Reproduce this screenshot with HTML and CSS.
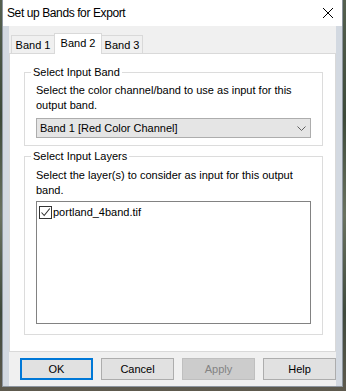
FILE: index.html
```html
<!DOCTYPE html>
<html>
<head>
<meta charset="utf-8">
<link rel="stylesheet" href="styles.css">
</head>
<body>
<div class="desk">
  <div class="dialog">
    <div class="titlebar">
      <span class="title">Set up Bands for Export</span>
      <svg class="close" width="12" height="12" viewBox="0 0 12 12"><path d="M1 1 L11 11 M11 1 L1 11" stroke="#000" stroke-width="1" fill="none"/></svg>
    </div>
    <div class="client">
      <div class="tabs">
        <div class="tab t1">Band 1</div>
        <div class="tab t2 active">Band 2</div>
        <div class="tab t3">Band 3</div>
      </div>
      <div class="panel">
        <fieldset class="group g1">
          <legend>Select Input Band</legend>
          <p class="desc">Select the color channel/band to use as input for this<br>output band.</p>
          <div class="combo">
            <span>Band 1 [Red Color Channel]</span>
            <svg class="chev" width="9" height="5" viewBox="0 0 9 5"><path d="M0.5 0.5 L4.5 4.5 L8.5 0.5" stroke="#606060" stroke-width="1" fill="none"/></svg>
          </div>
        </fieldset>
        <fieldset class="group g2">
          <legend>Select Input Layers</legend>
          <p class="desc">Select the layer(s) to consider as input for this output<br>band.</p>
          <div class="listbox">
            <div class="item">
              <span class="check"><svg width="11" height="11" viewBox="0 0 11 11"><path d="M1.5 5.5 L4.2 8.5 L9.8 1.5" stroke="#333" stroke-width="1.1" fill="none"/></svg></span>
              <span class="label">portland_4band.tif</span>
            </div>
          </div>
        </fieldset>
      </div>
      <div class="buttons">
        <div class="btn default">OK</div>
        <div class="btn">Cancel</div>
        <div class="btn disabled">Apply</div>
        <div class="btn">Help</div>
      </div>
    </div>
  </div>
</div>
</body>
</html>
```

FILE: styles.css
```css
html, body {
  margin: 0;
  padding: 0;
}
body {
  width: 346px;
  height: 391px;
  overflow: hidden;
  font-family: "Liberation Sans", Arial, sans-serif;
  font-size: 11px;
  color: #000;
}
.desk {
  width: 346px;
  height: 391px;
  background: linear-gradient(180deg, #55604f 0%, #3d4a3a 30%, #6a7260 55%, #3f4a3d 80%, #5e5a4e 100%);
  padding-left: 2px;
  box-sizing: border-box;
}
.dialog {
  width: 341px;
  height: 387px;
  box-sizing: border-box;
  border: 1px solid #8e96a0;
  border-top: none;
  background: #f0f0f0;
  display: flex;
  flex-direction: column;
}
.titlebar {
  height: 26px;
  flex: none;
  background: #fff;
  display: flex;
  align-items: center;
  padding-left: 4px;
  padding-right: 8px;
}
.title {
  font-size: 12px;
  letter-spacing: -0.4px;
  flex: 1;
  padding-bottom: 1px;
}
.close {
  display: block;
}
.client {
  flex: 1;
  border-left: 6px solid #d3d9e1;
  border-right: 6px solid #d3d9e1;
  padding-top: 7px;
  display: flex;
  flex-direction: column;
}
.tabs {
  display: flex;
  height: 20px;
  padding-left: 2px;
  position: relative;
  z-index: 1;
}
.tab {
  box-sizing: border-box;
  border: 1px solid #d9d9d9;
  border-bottom: none;
  background: #f0f0f0;
  margin-top: 2px;
  height: 18px;
  display: flex;
  align-items: center;
  justify-content: center;
  padding-top: 1px;
}
.t1 { width: 43px; border-right: none; }
.t2 { width: 48px; }
.t3 { width: 41px; border-left: none; }
.tab.active {
  background: #fff;
  margin-top: 0;
  height: 21px;
  padding-top: 0;
  padding-bottom: 2px;
}
.panel {
  box-sizing: border-box;
  width: 327px;
  background: #fff;
  border: 1px solid #d9d9d9;
  padding: 10px 12px 16px 14px;
}
.group {
  margin: 0;
  width: 299px;
  box-sizing: border-box;
  border: 1px solid #dcdcdc;
  padding: 3px 11px 7px 11px;
}
.group legend {
  line-height: 16px;
  padding: 0 2px;
  margin-left: -5px;
}
.g2 {
  margin-top: 2px;
  padding-top: 4px;
  padding-bottom: 10px;
}
.desc {
  margin: 0;
  line-height: 15px;
}
.combo {
  margin-top: 5px;
  height: 20px;
  box-sizing: border-box;
  border: 1px solid #adadad;
  background: #e5e5e5;
  display: flex;
  align-items: center;
  padding-left: 3px;
  padding-right: 4px;
}
.combo span {
  flex: 1;
}
.chev {
  display: block;
}
.listbox {
  margin-top: 3px;
  height: 123px;
  box-sizing: border-box;
  border: 1px solid #828282;
  background: #fff;
  padding: 2px 2px;
}
.item {
  display: flex;
  align-items: center;
  height: 16px;
}
.check {
  width: 13px;
  height: 13px;
  box-sizing: border-box;
  border: 1px solid #333;
  background: #fff;
  display: flex;
  align-items: center;
  justify-content: center;
  margin-right: 1px;
}
.check svg {
  display: block;
}
.buttons {
  display: flex;
  justify-content: flex-end;
  gap: 8px;
  margin-top: 6px;
  width: 327px;
}
.btn {
  width: 73px;
  height: 22px;
  box-sizing: border-box;
  border: 1px solid #adadad;
  background: #e1e1e1;
  display: flex;
  align-items: center;
  justify-content: center;
}
.btn.default {
  border: 2px solid #0078d7;
}
.btn.disabled {
  background: #cccccc;
  border-color: #bfbfbf;
  color: #838383;
}
```
